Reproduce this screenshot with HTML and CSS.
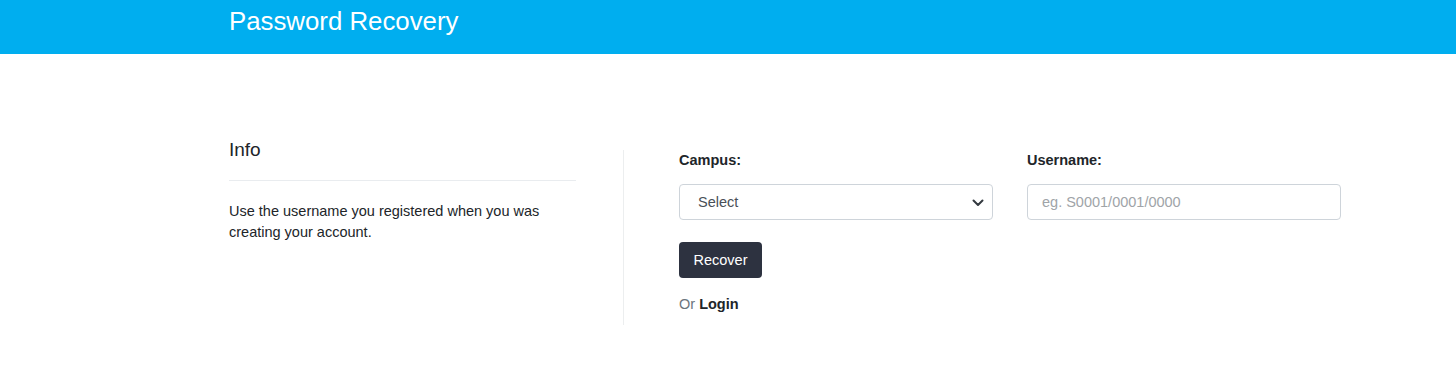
FILE: index.html
```html
<!DOCTYPE html>
<html lang="en">
<head>
<meta charset="utf-8">
<title>Password Recovery</title>
<link rel="stylesheet" href="styles.css">
</head>
<body>
<header class="topbar">
  <h1 class="title">Password Recovery</h1>
</header>
<main class="content">
  <section class="info">
    <h5 class="info-title">Info</h5>
    <hr class="info-rule">
    <p class="info-text">Use the username you registered when you was creating your account.</p>
  </section>
  <section class="form-col">
    <div class="fields">
      <div class="field">
        <label class="label" for="campus">Campus:</label>
        <div class="select">
          <span class="select-value">Select</span>
          <svg class="chev" width="14" height="10" viewBox="0 0 14 10"><path d="M2.5 3.5l4.5 4.5 4.5-4.5" fill="none" stroke="#343a40" stroke-width="2" stroke-linecap="round" stroke-linejoin="round"/></svg>
        </div>
      </div>
      <div class="field">
        <label class="label" for="username">Username:</label>
        <input class="input" id="username" type="text" placeholder="eg. S0001/0001/0000">
      </div>
    </div>
    <button class="btn" type="button">Recover</button>
    <p class="alt">Or <a class="alt-link" href="#">Login</a></p>
  </section>
</main>
</body>
</html>
```
FILE: styles.css
```css
* { box-sizing: border-box; }
body {
  margin: 0;
  font-family: "Liberation Sans", Arial, sans-serif;
  font-size: 14.5px;
  color: #212529;
  background: #fff;
}
.topbar {
  background: #00aeef;
  height: 54px;
  padding-left: 229px;
}
.title {
  margin: 0;
  font-size: 25.8px;
  font-weight: 400;
  line-height: 42px;
  color: #fff;
}
.content {
  display: flex;
  margin-left: 229px;
  padding-top: 84px;
}
.info {
  width: 347px;
}
.info-title {
  margin: 0;
  font-size: 19px;
  font-weight: 400;
  line-height: 24px;
  color: #212529;
}
.info-rule {
  margin: 18px 0 20px;
  border: 0;
  border-top: 1px solid #e9ecef;
}
.info-text {
  margin: 0;
  line-height: 21px;
}
.form-col {
  margin-left: 47px;
  margin-top: 12px;
  border-left: 1px solid #eceeef;
  padding-left: 55px;
  padding-bottom: 10px;
  width: 720px;
}
.fields {
  display: flex;
  gap: 34px;
}
.field {
  width: 314px;
}
.label {
  display: block;
  font-weight: 700;
  line-height: 21px;
  margin-bottom: 13px;
}
.select, .input {
  display: flex;
  align-items: center;
  width: 314px;
  height: 36px;
  border: 1px solid #ced4da;
  border-radius: 4px;
  padding: 0 7px 0 18px;
  font-family: inherit;
  font-size: 14.5px;
  color: #495057;
  background: #fff;
}
.select { justify-content: space-between; }
.input { padding-left: 14px; }
.input::placeholder { color: #a0a4a8; }
.btn {
  margin-top: 22px;
  height: 36px;
  width: 83px;
  border: 0;
  border-radius: 4px;
  background: #2d3240;
  color: #fff;
  font-family: inherit;
  font-size: 14.5px;
}
.alt {
  margin: 16px 0 0;
  line-height: 21px;
  color: #6c757d;
}
.alt-link {
  color: #212529;
  font-weight: 700;
  text-decoration: none;
}
```
